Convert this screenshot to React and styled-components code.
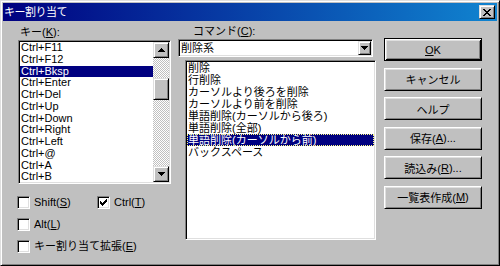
import React from 'react';
import styled, { createGlobalStyle, css } from 'styled-components';

const Global = createGlobalStyle`
  html, body { margin: 0; padding: 0; background: #c0c0c0; }
  body {
    font-family: "Liberation Sans", "Noto Sans CJK JP", sans-serif;
    font-size: 11px;
    color: #000;
  }
  * { box-sizing: border-box; }
`;

const raised = css`
  background: #c0c0c0;
  border: 1px solid;
  border-color: #dfdfdf #000 #000 #dfdfdf;
  box-shadow: inset 1px 1px #fff, inset -1px -1px #808080;
`;

const sunken = css`
  border: 1px solid;
  border-color: #808080 #fff #fff #808080;
  box-shadow: inset 1px 1px #000, inset -1px -1px #dfdfdf;
  padding: 1px;
`;

const Window = styled.div`
  width: 500px;
  height: 266px;
  padding: 2px;
  display: flex;
  flex-direction: column;
  ${raised}
`;

const TitleBar = styled.div`
  height: 18px;
  display: flex;
  align-items: center;
  justify-content: space-between;
  padding: 0 2px 0 1px;
  background: linear-gradient(90deg, #000080 0%, #1084d0 100%);
`;

const TitleText = styled.span`
  color: #fff;
  font-size: 11px;
  line-height: 18px;
  letter-spacing: -0.5px;
`;

const CloseBtn = styled.div`
  width: 16px;
  height: 14px;
  display: flex;
  align-items: center;
  justify-content: center;
  ${raised}
`;

const Content = styled.div`
  flex: 1;
  display: flex;
  padding: 3px 0 0 14px;
`;

const LeftCol = styled.div`
  width: 154px;
  display: flex;
  flex-direction: column;
`;

const MidCol = styled.div`
  width: 198px;
  margin-left: 7px;
  display: flex;
  flex-direction: column;
`;

const RightCol = styled.div`
  width: 98px;
  margin-left: 8px;
  padding-top: 14px;
  display: flex;
  flex-direction: column;
  gap: 6.6px;
`;

const Label = styled.div`
  line-height: ${(p) => p.$h}px;
  height: ${(p) => p.$h}px;
  margin-left: ${(p) => p.$indent}px;
  white-space: nowrap;
`;

const U = styled.span`
  text-decoration: underline;
  text-underline-offset: 1px;
`;

const ListBox = styled.div`
  ${sunken}
  width: ${(p) => p.$w}px;
  height: ${(p) => p.$h}px;
  margin-left: ${(p) => p.$ml || 0}px;
  margin-top: ${(p) => p.$mt || 0}px;
  display: flex;
`;

const Items = styled.div`
  flex: 1;
  background: #fff;
  overflow: hidden;
`;

const Item = styled.div`
  height: ${(p) => p.$rh}px;
  line-height: ${(p) => p.$rh}px;
  padding-left: 1px;
  white-space: nowrap;
  ${(p) =>
    p.$sel &&
    css`
      background: #000080;
      color: #fff;
    `}
  ${(p) =>
    p.$focus &&
    css`
      outline: 1px dotted #ffff80;
      outline-offset: -1px;
    `}
`;

const ScrollBar = styled.div`
  width: 16px;
  display: flex;
  flex-direction: column;
`;

const ArrowBtn = styled.div`
  width: 16px;
  height: 16px;
  display: flex;
  align-items: center;
  justify-content: center;
  ${raised}
`;

const Track = styled.div`
  flex: 1;
  padding-top: 20px;
  background: repeating-conic-gradient(#c0c0c0 0% 25%, #fff 0% 50%) 0 0 / 2px 2px;
`;

const Thumb = styled.div`
  width: 16px;
  height: 22px;
  ${raised}
`;

const Checks = styled.div`
  margin-top: 12px;
  display: flex;
  flex-direction: column;
  gap: 9px;
`;

const CheckRow = styled.div`
  display: flex;
  height: 13px;
`;

const Check = styled.div`
  display: flex;
  align-items: center;
  gap: 4px;
  width: ${(p) => (p.$w ? `${p.$w}px` : 'auto')};
  white-space: nowrap;
  line-height: 13px;
`;

const Box = styled.div`
  width: 13px;
  height: 13px;
  background: #fff;
  display: flex;
  align-items: center;
  justify-content: center;
  ${sunken}
`;

const Combo = styled.div`
  ${sunken}
  width: 195px;
  height: 18px;
  display: flex;
`;

const ComboText = styled.div`
  flex: 1;
  background: #fff;
  line-height: 14px;
  padding-left: 1px;
`;

const DropBtn = styled.div`
  width: 13px;
  height: 14px;
  display: flex;
  align-items: center;
  justify-content: center;
  ${raised}
`;

const Button = styled.div`
  height: 23px;
  display: flex;
  align-items: center;
  justify-content: center;
  background: #c0c0c0;
  white-space: nowrap;
  ${(p) =>
    p.$default
      ? css`
          border: 1px solid #000;
          box-shadow: inset 1px 1px #fff, inset -1px -1px #000,
            inset 2px 2px #dfdfdf, inset -2px -2px #808080;
        `
      : css`
          border: 1px solid;
          border-color: #fff #000 #000 #fff;
          box-shadow: inset 1px 1px #dfdfdf, inset -1px -1px #808080;
        `}
`;

const Tri = ({ up }) => (
  <svg width="7" height="4" viewBox="0 0 7 4" shapeRendering="crispEdges">
    {up ? (
      <path d="M3 0h1v1h1v1h1v1h1v1H0V3h1V2h1V1h1z" fill="#000" />
    ) : (
      <path d="M0 0h7v1H6v1H5v1H4v1H3V3H2V2H1V1H0z" fill="#000" />
    )}
  </svg>
);

const CheckMark = () => (
  <svg width="7" height="7" viewBox="0 0 7 7" shapeRendering="crispEdges">
    <path
      d="M6 0h1v3H6v1H5v1H4v1H3v1H2V6H1V5H0V2h1v1h1v1h1V3h1V2h1V1h1z"
      fill="#000"
    />
  </svg>
);

const CloseX = () => (
  <svg width="8" height="7" viewBox="0 0 8 7" shapeRendering="crispEdges">
    <path
      d="M0 0h2v1h1v1h2V1h1V0h2v1H7v1H6v1H5v1h1v1h1v1h1v1H6V6H5V5H3v1H2v1H0V6h1V5h1V4h1V3H2V2H1V1H0z"
      fill="#000"
    />
  </svg>
);

const keys = [
  'Ctrl+F11',
  'Ctrl+F12',
  'Ctrl+Bksp',
  'Ctrl+Enter',
  'Ctrl+Del',
  'Ctrl+Up',
  'Ctrl+Down',
  'Ctrl+Right',
  'Ctrl+Left',
  'Ctrl+@',
  'Ctrl+A',
  'Ctrl+B',
];

const commands = [
  '削除',
  '行削除',
  'カーソルより後ろを削除',
  'カーソルより前を削除',
  '単語削除(カーソルから後ろ)',
  '単語削除(全部)',
  '単語削除(カーソルから前)',
  'バックスペース',
];

export default function App() {
  return (
    <>
      <Global />
      <Window>
        <TitleBar>
          <TitleText>キー割り当て</TitleText>
          <CloseBtn>
            <CloseX />
          </CloseBtn>
        </TitleBar>
        <Content>
          <LeftCol>
            <Label $h={16} $indent={3}>
              キー(<U>K</U>):
            </Label>
            <ListBox $w={153} $h={144} $ml={1}>
              <Items>
                {keys.map((k, i) => (
                  <Item key={k} $rh={11.75} $sel={i === 2}>
                    {k}
                  </Item>
                ))}
              </Items>
              <ScrollBar>
                <ArrowBtn>
                  <Tri up />
                </ArrowBtn>
                <Track>
                  <Thumb />
                </Track>
                <ArrowBtn>
                  <Tri />
                </ArrowBtn>
              </ScrollBar>
            </ListBox>
            <Checks>
              <CheckRow>
                <Check $w={80}>
                  <Box />
                  <span>
                    Shift(<U>S</U>)
                  </span>
                </Check>
                <Check>
                  <Box>
                    <CheckMark />
                  </Box>
                  <span>
                    Ctrl(<U>T</U>)
                  </span>
                </Check>
              </CheckRow>
              <CheckRow>
                <Check>
                  <Box />
                  <span>
                    Alt(<U>L</U>)
                  </span>
                </Check>
              </CheckRow>
              <CheckRow>
                <Check>
                  <Box />
                  <span>
                    キー割り当て拡張(<U>E</U>)
                  </span>
                </Check>
              </CheckRow>
            </Checks>
          </LeftCol>
          <MidCol>
            <Label $h={15} $indent={15}>
              コマンド(<U>C</U>):
            </Label>
            <Combo>
              <ComboText>削除系</ComboText>
              <DropBtn>
                <Tri />
              </DropBtn>
            </Combo>
            <ListBox $w={191} $h={180} $ml={7} $mt={3}>
              <Items>
                {commands.map((c, i) => (
                  <Item key={c} $rh={12} $sel={i === 6} $focus={i === 6}>
                    {c}
                  </Item>
                ))}
              </Items>
            </ListBox>
          </MidCol>
          <RightCol>
            <Button $default>
              <U>O</U>K
            </Button>
            <Button>キャンセル</Button>
            <Button>ヘルプ</Button>
            <Button>
              保存(<U>A</U>)...
            </Button>
            <Button>
              読込み(<U>R</U>)...
            </Button>
            <Button>
              一覧表作成(<U>M</U>)
            </Button>
          </RightCol>
        </Content>
      </Window>
    </>
  );
}
